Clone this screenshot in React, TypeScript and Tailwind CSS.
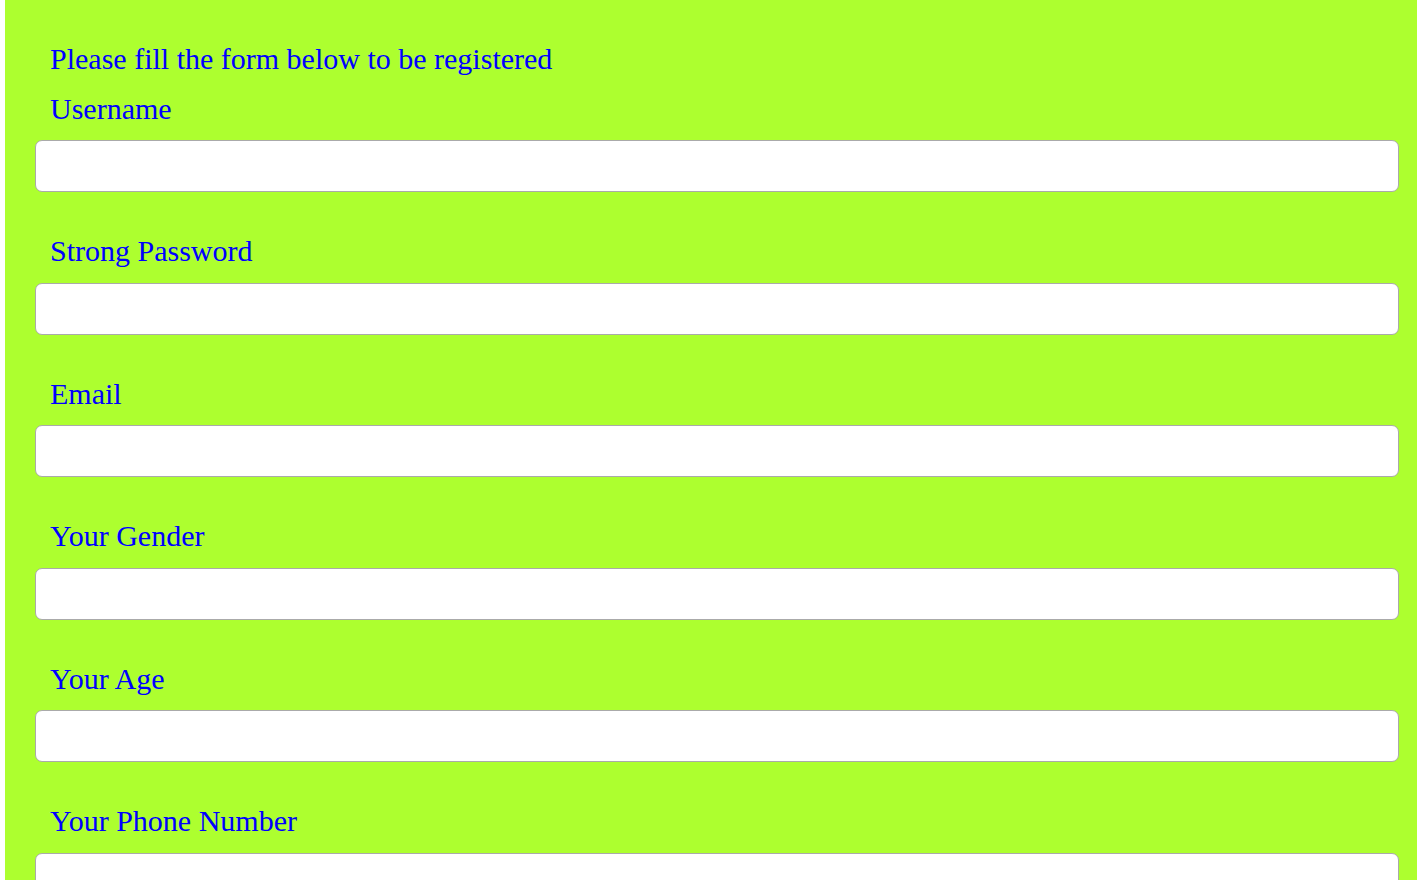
const fields = [
  "Username",
  "Strong Password",
  "Email",
  "Your Gender",
  "Your Age",
  "Your Phone Number",
];

export default function App() {
  return (
    <div className="min-h-screen bg-white">
      <div className="ml-[5px] bg-[#adff2f] pt-[41.5px] pb-[40px] pl-[30px] pr-[18px] font-['Liberation_Serif','Times_New_Roman',serif] text-[#0000ff]">
        <p className="mb-[15.5px] pl-[15px] text-[30px] leading-[34.5px]">
          Please fill the form below to be registered
        </p>
        <form className="flex flex-col">
          {fields.map((f) => (
            <div key={f} className="mb-[42px] flex flex-col">
              <label className="mb-[14px] pl-[15px] text-[30px] leading-[34.5px]">{f}</label>
              <input
                type="text"
                className="h-[52px] w-full rounded-[7px] border border-[#aaaaaa] bg-white px-3 text-[16px] text-black outline-none"
              />
            </div>
          ))}
        </form>
      </div>
    </div>
  );
}
